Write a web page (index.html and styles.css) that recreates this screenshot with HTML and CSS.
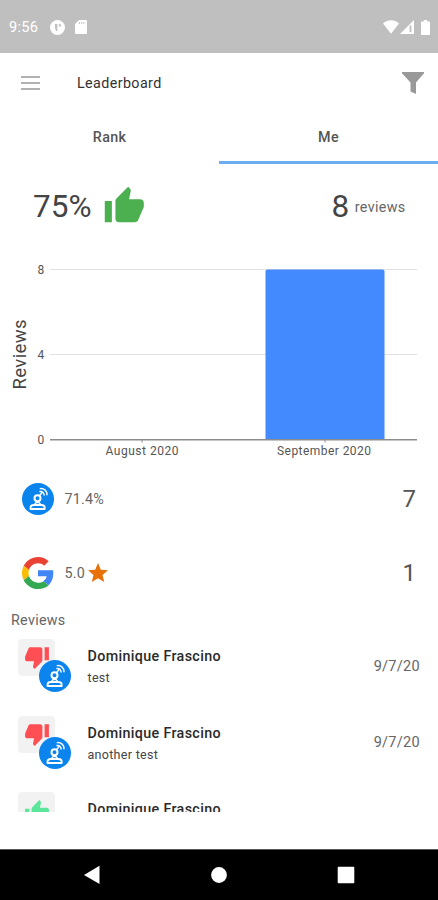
FILE: index.html
```html
<!DOCTYPE html>
<html lang="en">
<head>
<meta charset="utf-8">
<title>Leaderboard</title>
<link rel="stylesheet" href="styles.css">
</head>
<body>
<svg class="defs" aria-hidden="true">
  <symbol id="up" viewBox="0 0 24 24"><path d="M1 21h4V9H1v12zm22-11c0-1.100-.9-2-2-2h-6.310l.95-4.570.03-.32c0-.41-.17-.79-.44-1.060L14.170 1 7.590 7.590C7.220 7.950 7 8.450 7 9v10c0 1.100.9 2 2 2h9c.83 0 1.540-.5 1.840-1.220l3.020-7.050c.09-.23.14-.47.14-.73v-2z"/></symbol>
  <symbol id="down" viewBox="0 0 24 24"><path d="M15 3H6c-.83 0-1.540.5-1.840 1.220l-3.020 7.050c-.09.23-.14.47-.14.73v2c0 1.100.9 2 2 2h6.310l-.95 4.570-.03.32c0 .41.17.79.44 1.060L9.830 23l6.590-6.590c.36-.36.58-.86.58-1.410V5c0-1.100-.9-2-2-2zm4 0v12h4V3h-4z"/></symbol>
  <symbol id="agent" viewBox="0 0 32 32">
    <circle cx="16" cy="16" r="16" fill="#0b84ee"/>
    <g fill="none" stroke="#fff" stroke-linecap="round" stroke-linejoin="round">
      <circle cx="15.500" cy="15.200" r="3" stroke-width="2"/>
      <path stroke-width="1.800" d="M8.500 26v-1.300c0-1.700 1.500-2.700 3.300-2.700h7.600c1.800 0 3.300 1 3.300 2.700V26z"/>
      <path stroke-width="1.400" d="M18 12l1.700-2M18 8.500c2.200-.4 4 1.200 4.100 3.500M18.300 5.600c3.900-.4 6.800 2.400 6.700 6.200"/>
      <path stroke-width="1.300" d="M12.500 21.500l1.700-2h2.800l1.700 2"/>
    </g>
  </symbol>
</svg>
<div class="screen">
  <header class="status">
    <span class="clock">9:56</span>
    <svg class="st-app" viewBox="0 0 16 16"><circle cx="8" cy="8" r="8" fill="#fff"/><path d="M5.300 4.300h2.500v7.500H6.400c-1.100-1.800-1.100-5.500-1.100-7.500zM9.400 4.500h2.200v2.400H9.400z" fill="#bfbfbf"/></svg>
    <svg class="st-card" viewBox="0 0 12 14"><path d="M4 0h6.500C11.500 0 12 .6 12 1.500v11c0 1-.5 1.500-1.500 1.500h-9C.5 14 0 13.500 0 12.500V4z" fill="#fff"/><path d="M4.500 2v2M6.700 2v2M8.900 2v2" stroke="#bfbfbf" stroke-width=".9"/></svg>
    <span class="grow"></span>
    <svg class="st-wifi" viewBox="0 0 16 14"><path d="M0 3.500C4.500-.8 11.500-.8 16 3.500L8 13.700z" fill="#fff"/></svg>
    <svg class="st-cell" viewBox="0 0 14 14"><path d="M0 14L14 0v14z" fill="#fff"/><path d="M10.500 5.500v6.500" stroke="#bfbfbf" stroke-width="1.800"/></svg>
    <svg class="st-batt" viewBox="0 0 9 15"><path d="M2.700 0h3.600v1.500H8c.6 0 1 .4 1 1V14c0 .6-.4 1-1 1H1c-.6 0-1-.4-1-1V2.500c0-.6.4-1 1-1h1.700z" fill="#fff"/></svg>
  </header>
  <div class="appbar">
    <svg class="menu" viewBox="0 0 19 14"><path d="M0 1h19M0 7h19M0 13h19" stroke="#989898" stroke-width="1.500"/></svg>
    <h1 class="title">Leaderboard</h1>
    <svg class="filter" viewBox="0 0 22 22"><path d="M0 0h22v1.200L14 10.500V22l-5.500-2.600v-8.900L0 1.200z" fill="#999"/></svg>
  </div>
  <nav class="tabs"><div class="tab">Rank</div><div class="tab active">Me</div></nav>
  <section class="summary">
    <span class="big percent">75%</span>
    <svg class="thumb" fill="#4caf50"><use href="#up"/></svg>
    <span class="grow"></span>
    <span class="big">8</span><span class="unit">reviews</span>
  </section>
  <svg class="chart" viewBox="0 0 438 228">
    <path d="M50 28.500h367M50 113.500h367" stroke="#e2e2e2" stroke-width="1.200"/>
    <path d="M265.500 199V30.500q0-2 2-2h115q2 0 2 2V199z" fill="#448aff"/>
    <path d="M50 198.700h367" stroke="#8c8c8c" stroke-width="1.500"/>
    <path d="M142 199v2.500M325 199v2.500" stroke="#8c8c8c"/>
    <g class="tick"><text x="37.500" y="32.500">8</text><text x="37.500" y="117.500">4</text><text x="37.500" y="202.500">0</text></g>
    <g class="tick"><text x="105.500" y="213.500" textLength="73">August 2020</text><text x="277" y="213.500" textLength="94">September 2020</text></g>
    <text class="axis" transform="translate(25.500 148.500) rotate(-90)" textLength="70">Reviews</text>
  </svg>
  <section class="sources">
    <div class="source"><svg class="logo"><use href="#agent"/></svg><span class="score">71.4%</span><span class="grow"></span><span class="count">7</span></div>
    <div class="source"><svg class="logo" viewBox="0 0 48 48"><path fill="#EA4335" d="M24 9.500c3.540 0 6.710 1.220 9.210 3.600l6.850-6.850C35.900 2.380 30.470 0 24 0 14.620 0 6.510 5.380 2.560 13.220l7.980 6.190C12.430 13.720 17.740 9.500 24 9.500z"/><path fill="#4285F4" d="M46.980 24.550c0-1.570-.15-3.090-.38-4.550H24v9.020h12.940c-.58 2.960-2.260 5.480-4.780 7.180l7.730 6c4.510-4.180 7.090-10.360 7.090-17.650z"/><path fill="#FBBC05" d="M10.530 28.590c-.48-1.450-.76-2.990-.76-4.590s.27-3.140.76-4.590l-7.980-6.190C.92 16.460 0 20.120 0 24s.92 7.540 2.560 10.780l7.970-6.190z"/><path fill="#34A853" d="M24 48c6.480 0 11.930-2.130 15.890-5.810l-7.730-6c-2.150 1.450-4.920 2.300-8.160 2.300-6.260 0-11.570-4.220-13.470-9.910l-7.980 6.190C6.510 42.620 14.620 48 24 48z"/></svg><span class="score">5.0</span><svg class="star" viewBox="0 0 24 24"><path fill="#e8710a" d="M12 17.270L18.180 21l-1.640-7.030L22 9.240l-7.190-.61L12 2 9.190 8.630 2 9.240l5.460 4.730L5.820 21z"/></svg><span class="grow"></span><span class="count">1</span></div>
  </section>
  <h2 class="heading">Reviews</h2>
  <section class="reviews">
    <article class="review"><div class="avatar"><svg class="vote bad"><use href="#down"/></svg><svg class="badge"><use href="#agent"/></svg></div><div class="body"><div class="name">Dominique Frascino</div><div class="note">test</div></div><time class="date">9/7/20</time></article>
    <article class="review"><div class="avatar"><svg class="vote bad"><use href="#down"/></svg><svg class="badge"><use href="#agent"/></svg></div><div class="body"><div class="name">Dominique Frascino</div><div class="note">another test</div></div><time class="date">9/7/20</time></article>
    <article class="review"><div class="avatar"><svg class="vote good"><use href="#up"/></svg></div><div class="body"><div class="name">Dominique Frascino</div></div></article>
  </section>
  <footer class="navbar">
    <svg viewBox="0 0 18 20"><path d="M0 10L15.500.8V19z" fill="#fff"/></svg>
    <svg viewBox="0 0 18 20"><circle cx="9" cy="10" r="7.900" fill="#fff"/></svg>
    <svg viewBox="0 0 18 20"><rect x=".7" y="1.700" width="16.600" height="16.600" rx="1" fill="#fff"/></svg>
  </footer>
</div>
</body>
</html>
```
FILE: styles.css
```css
* { box-sizing: border-box; }
body { margin: 0; background: #fff; font-family: Roboto, "Liberation Sans", sans-serif; color: #444; }
svg { display: block; flex: none; }
.defs { display: none; }
.screen { width: 438px; height: 900px; display: flex; flex-direction: column; overflow: hidden; }
.screen > * { flex: none; }
.grow { flex: 1; }

.status { height: 53px; background: #bfbfbf; display: flex; align-items: center; padding: 1px 8px 0 9px; }
.clock { color: #fff; font-size: 14.5px; letter-spacing: .3px; width: 41px; }
.st-app { width: 15px; height: 15px; margin-right: 10px; }
.st-card { width: 12px; height: 14px; }
.st-wifi { width: 16px; height: 14px; }
.st-cell { width: 14px; height: 14px; margin: 0 7px 0 1px; }
.st-batt { width: 9px; height: 15px; }

.appbar { height: 60px; display: flex; align-items: center; padding: 0 14.500px 0 21px; }
.menu { width: 19px; height: 14px; }
.title { margin: 0 auto 0 37px; font-size: 14.300px; font-weight: 400; letter-spacing: .4px; color: #333; }
.filter { width: 22px; height: 22px; }

.tabs { height: 51px; display: flex; }
.tab { flex: 1; text-align: center; line-height: 49px; height: 51px; font-size: 14.300px; font-weight: 500; letter-spacing: .3px; color: #555; border-bottom: 3px solid transparent; }
.tab.active { border-color: #6cacf0; }

.summary { height: 78px; display: flex; align-items: center; padding: 0 32.500px 0 33px; }
.summary .big { font-size: 31.500px; line-height: 40px; margin-top: 8px; }
.percent { width: 69.500px; }
.thumb { width: 42.600px; height: 42.600px; margin-top: 6.500px; }
.unit { font-size: 14.3px; letter-spacing: .35px; margin: 7px 0 0 5.500px; color: #666; }

.chart { width: 438px; height: 228px; margin-top: -1px; }
.tick { font-size: 12px; fill: #555; }
.axis { font-size: 18.500px; fill: #444; }

.source { height: 74.500px; display: flex; align-items: center; padding: 0 22px 0 21.500px; }
.sources { height: 140px; margin-top: -7.500px; }
.logo { width: 32px; height: 32px; }
.score { font-size: 14.300px; margin-left: 11px; letter-spacing: .2px; color: #666; }
.star { width: 24px; height: 24px; margin-left: 1.500px; }
.count { font-size: 24px; color: #555; }

.heading { margin: 0; height: 36.500px; padding-left: 11px; font-size: 14.300px; line-height: 36px; font-weight: 400; letter-spacing: .3px; color: #666; }
.reviews { height: 174px; overflow: hidden; }
.review { height: 76.500px; display: flex; padding: 1px 18px 0; }
.avatar { position: relative; width: 37px; height: 37px; border-radius: 4px; background: #f2f2f2; }
.vote { width: 26px; height: 26px; margin: 5px 0 0 5.500px; }
.bad { fill: #ff4f55; }
.good { fill: #5be79b; margin-top: 7px; }
.badge { position: absolute; left: 21px; top: 21px; width: 32px; height: 32px; }
.body { flex: 1; padding-left: 32.500px; padding-top: 7px; }
.name { font-size: 14.300px; line-height: 20px; font-weight: 500; letter-spacing: .35px; color: #2a2a2a; }
.note { font-size: 12.500px; line-height: 20px; margin-top: 2px; letter-spacing: .3px; color: #444; }
.date { font-size: 14.500px; line-height: 20px; letter-spacing: .3px; margin-top: 17.500px; color: #666; }

.navbar { margin-top: auto; height: 51px; background: #000; border-top: 1px solid #555; display: flex; justify-content: space-between; align-items: center; padding: 0 83.500px; }
.navbar svg { width: 18px; height: 20px; }
```
